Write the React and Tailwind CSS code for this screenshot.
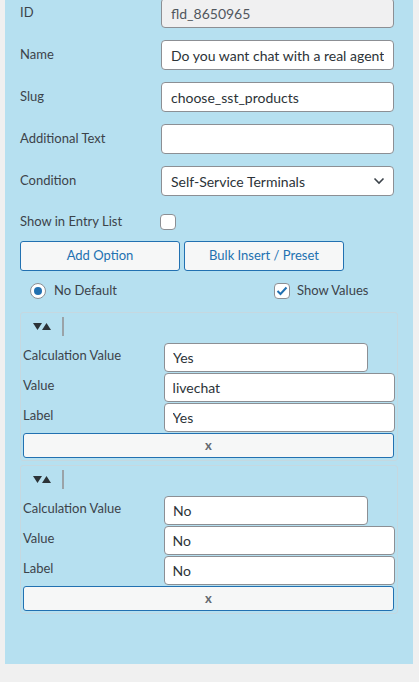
import React from "react";

const font = { fontFamily: 'Lato, "Open Sans", sans-serif' };

const Row = ({ label, children, className = "" }) => (
  <div className={`flex items-center h-[30px] ${className}`}>
    <div className="w-[141px] text-[13px] text-[#3c434a]">{label}</div>
    {children}
  </div>
);

const inputCls =
  "w-[233px] h-[30px] rounded-[4px] border border-[#8c8f94] bg-white px-[9px] text-[14px] text-[#2c3338] outline-none";

const Arrows = () => (
  <svg width="19" height="9" viewBox="0 0 19 9">
    <path d="M0 1 L9 1 L4.5 8 Z" fill="#2c3338" />
    <path d="M9 8 L18 8 L13.5 1 Z" fill="#2c3338" />
  </svg>
);

const OptionBox = ({ calc, value, label }) => (
  <div className="border border-[#c5d8e0] rounded-[3px] px-[2px] pt-[3px] pb-[2px]">
    <div className="flex items-center h-[20px] pl-[10px]">
      <Arrows />
      <span className="ml-[10px] w-[2px] h-[19px] bg-[#9aa3a8]"></span>
    </div>
    <div className="flex flex-col gap-[1px] mt-[7px]">
      <div className="flex items-center h-[29px]">
        <div className="w-[141px] text-[13px] text-[#3c434a] -mt-[3px]">Calculation Value</div>
        <input readOnly value={calc} className="w-[204px] h-[29px] rounded-[4px] border border-[#8c8f94] bg-white px-[8px] text-[14px] text-[#2c3338] outline-none" />
      </div>
      <div className="flex items-center h-[29px]">
        <div className="w-[141px] text-[13px] text-[#3c434a] -mt-[3px]">Value</div>
        <input readOnly value={value} className="w-[232px] h-[29px] rounded-[4px] border border-[#8c8f94] bg-white px-[8px] text-[14px] text-[#2c3338] outline-none" />
      </div>
      <div className="flex items-center h-[29px]">
        <div className="w-[141px] text-[13px] text-[#3c434a] -mt-[3px]">Label</div>
        <input readOnly value={label} className="w-[232px] h-[29px] rounded-[4px] border border-[#8c8f94] bg-white px-[8px] text-[14px] text-[#2c3338] outline-none" />
      </div>
    </div>
    <button className="block w-[371px] h-[25px] mt-[1px] rounded-[3px] border border-[#2271b1] bg-[#f6f7f7] text-[13px] font-bold text-[#646970]">
      x
    </button>
  </div>
);

export default function App() {
  return (
    <div className="min-h-[682px] bg-[#f0f0f0]" style={font}>
      <div className="ml-[5px] w-[408px] h-[664px] bg-[#b6e0f0] pl-[15px] overflow-hidden">
        <div className="flex flex-col gap-[12px] -mt-[2px]">
          <Row label="ID">
            <input readOnly value="fld_8650965" className={`${inputCls} !bg-[#f0f0f1] !text-[#50575e]`} />
          </Row>
          <Row label="Name">
            <input readOnly value="Do you want chat with a real agent" className={inputCls} />
          </Row>
          <Row label="Slug">
            <input readOnly value="choose_sst_products" className={inputCls} />
          </Row>
          <Row label="Additional Text">
            <input readOnly value="" className={inputCls} />
          </Row>
          <Row label="Condition">
            <div className={`${inputCls} flex items-center justify-between pr-[8px]`}>
              <span>Self-Service Terminals</span>
              <svg width="12" height="8" viewBox="0 0 12 8" fill="none">
                <path d="M1.5 1.5 L6 6 L10.5 1.5" stroke="#3c434a" strokeWidth="1.6" />
              </svg>
            </div>
          </Row>
        </div>

        <div className="flex items-center h-[16px] mt-[18px]">
          <div className="w-[140px] text-[13px] text-[#3c434a]">Show in Entry List</div>
          <span className="w-[16px] h-[16px] rounded-[4px] border border-[#8c8f94] bg-white"></span>
        </div>

        <div className="flex gap-[4px] mt-[11px]">
          <button className="w-[160px] h-[30px] rounded-[3px] border border-[#2271b1] bg-[#f6f7f7] text-[13px] text-[#2271b1]">
            Add Option
          </button>
          <button className="w-[160px] h-[30px] rounded-[3px] border border-[#2271b1] bg-[#f6f7f7] text-[13px] text-[#2271b1]">
            Bulk Insert / Preset
          </button>
        </div>

        <div className="flex items-center h-[16px] mt-[12px] pl-[10px]">
          <div className="w-[244px] flex items-center">
            <span className="w-[16px] h-[16px] rounded-full border border-[#8c8f94] bg-white flex items-center justify-center">
              <span className="w-[8px] h-[8px] rounded-full bg-[#2271b1]"></span>
            </span>
            <span className="ml-[8px] text-[13px] text-[#3c434a]">No Default</span>
          </div>
          <span className="w-[16px] h-[16px] rounded-[4px] border border-[#8c8f94] bg-white flex items-center justify-center">
            <svg width="12" height="10" viewBox="0 0 12 10" fill="none">
              <path d="M1.5 5 L4.5 8 L10.5 1.5" stroke="#2271b1" strokeWidth="2" />
            </svg>
          </span>
          <span className="ml-[7px] text-[13px] text-[#3c434a]">Show Values</span>
        </div>

        <div className="w-[378px] mt-[13px] flex flex-col gap-[4px]">
          <OptionBox calc="Yes" value="livechat" label="Yes" />
          <OptionBox calc="No" value="No" label="No" />
        </div>
      </div>
    </div>
  );
}
